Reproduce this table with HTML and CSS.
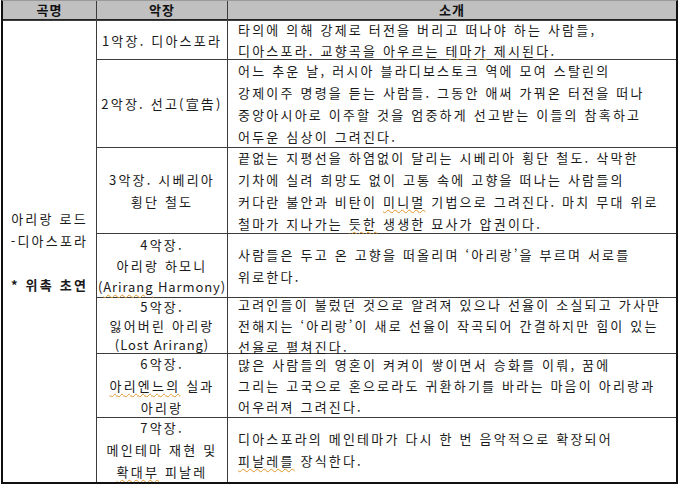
FILE: index.html
```html
<!DOCTYPE html>
<html lang="ko">
<head>
<meta charset="utf-8">
<link rel="stylesheet" href="styles.css">
</head>
<body>
<div class="sheet">
  <div class="hd">곡명</div>
  <div class="hd">악장</div>
  <div class="hd">소개</div>

  <div class="title">
    <div>아리랑 로드</div>
    <div>-디아스포라</div>
    <div>&nbsp;</div>
    <div class="bold">* 위촉 초연</div>
  </div>

  <div class="mv">
    <div>1악장. 디아스포라</div>
  </div>
  <div class="desc">
    <div>타의에 의해 강제로 터전을 버리고 떠나야 하는 사람들,</div>
    <div>디아스포라. 교향곡을 아우르는 <span class="sp">테마가</span> 제시된다.</div>
  </div>

  <div class="mv">
    <div>2악장. 선고(宣告)</div>
  </div>
  <div class="desc tall">
    <div>어느 추운 날, 러시아 블라디보스토크 역에 모여 스탈린의</div>
    <div>강제이주 명령을 듣는 사람들. 그동안 애써 가꿔온 터전을 떠나</div>
    <div>중앙아시아로 이주할 것을 엄중하게 선고받는 이들의 참혹하고</div>
    <div>어두운 심상이 그려진다.</div>
  </div>

  <div class="mv tall">
    <div>3악장. 시베리아</div>
    <div>횡단 철도</div>
  </div>
  <div class="desc tall">
    <div>끝없는 지평선을 하염없이 달리는 시베리아 횡단 철도. 삭막한</div>
    <div>기차에 실려 희망도 없이 고통 속에 고향을 떠나는 사람들의</div>
    <div>커다란 불안과 비탄이 <span class="sp">미니멀</span> 기법으로 그려진다. 마치 무대 위로</div>
    <div>철마가 지나가는 <span class="sp">듯한</span> 생생한 묘사가 압권이다.</div>
  </div>

  <div class="mv">
    <div>4악장.</div>
    <div>아리랑 하모니</div>
    <div class="lat">(<span class="sp">Arirang</span> Harmony)</div>
  </div>
  <div class="desc tall">
    <div>사람들은 두고 온 고향을 떠올리며 ‘아리랑’을 부르며 서로를</div>
    <div>위로한다.</div>
  </div>

  <div class="mv tight">
    <div>5악장.</div>
    <div>잃어버린 아리랑</div>
    <div class="lat">(Lost Arirang)</div>
  </div>
  <div class="desc">
    <div>고려인들이 불렀던 것으로 알려져 있으나 선율이 소실되고 가사만</div>
    <div>전해지는 ‘아리랑’이 새로 선율이 작곡되어 간결하지만 힘이 있는</div>
    <div>선율로 펼쳐진다.</div>
  </div>

  <div class="mv tall">
    <div>6악장.</div>
    <div><span class="sp">아리엔느의</span> 실과</div>
    <div>아리랑</div>
  </div>
  <div class="desc">
    <div>많은 사람들의 영혼이 켜켜이 쌓이면서 승화를 이뤄, 꿈에</div>
    <div>그리는 고국으로 혼으로라도 귀환하기를 바라는 마음이 아리랑과</div>
    <div>어우러져 그려진다.</div>
  </div>

  <div class="mv tall">
    <div>7악장.</div>
    <div>메인테마 재현 및</div>
    <div><span class="sp">확대부</span> 피날레</div>
  </div>
  <div class="desc tall">
    <div>디아스포라의 메인테마가 다시 한 번 음악적으로 확장되어</div>
    <div><span class="sp">피날레를</span> 장식한다.</div>
  </div>
</div>
</body>
</html>
```
FILE: styles.css
```css
html, body {
  margin: 0;
  padding: 0;
  background: #ffffff;
}

body {
  font-family: "Noto Sans CJK KR", "Noto Sans", sans-serif;
  font-size: 13px;
  color: #1a1a1a;
}

.sheet {
  box-sizing: border-box;
  width: 677px;
  height: 484px;
  margin-left: 1px;
  display: grid;
  grid-template-columns: 93px 130px 1fr;
  grid-template-rows: 19px 38px 87px 85px 63px 55px 63px 1fr;
  gap: 1px;
  background: #3c3c3c;
  border-left: 2px solid #111;
  border-right: 2px solid #111;
  border-bottom: 2px solid #111;
  border-top: 1px solid #9a9a9a;
  overflow: hidden;
}

.hd {
  background: #c0c0c0;
  border-bottom: 1px solid #222;
  font-weight: bold;
  text-align: center;
  line-height: 18px;
  font-size: 13px;
  letter-spacing: 1px;
  color: #111;
}

.title,
.mv,
.desc {
  background: #ffffff;
  display: flex;
  flex-direction: column;
  justify-content: center;
  line-height: 21px;
  letter-spacing: 2.2px;
  white-space: nowrap;
  min-height: 0;
}

.tall {
  line-height: 22px;
}

.tight {
  line-height: 19px;
}

.title {
  grid-row: 2 / span 7;
  text-align: center;
  line-height: 22px;
}

.bold {
  font-weight: bold;
}

.mv {
  text-align: center;
}

.lat {
  letter-spacing: 0.9px;
}

.desc {
  text-align: left;
  padding-left: 10px;
}

.sp {
  text-decoration: underline wavy #e0962c;
  text-decoration-thickness: 1px;
  text-underline-offset: 2px;
}
```
